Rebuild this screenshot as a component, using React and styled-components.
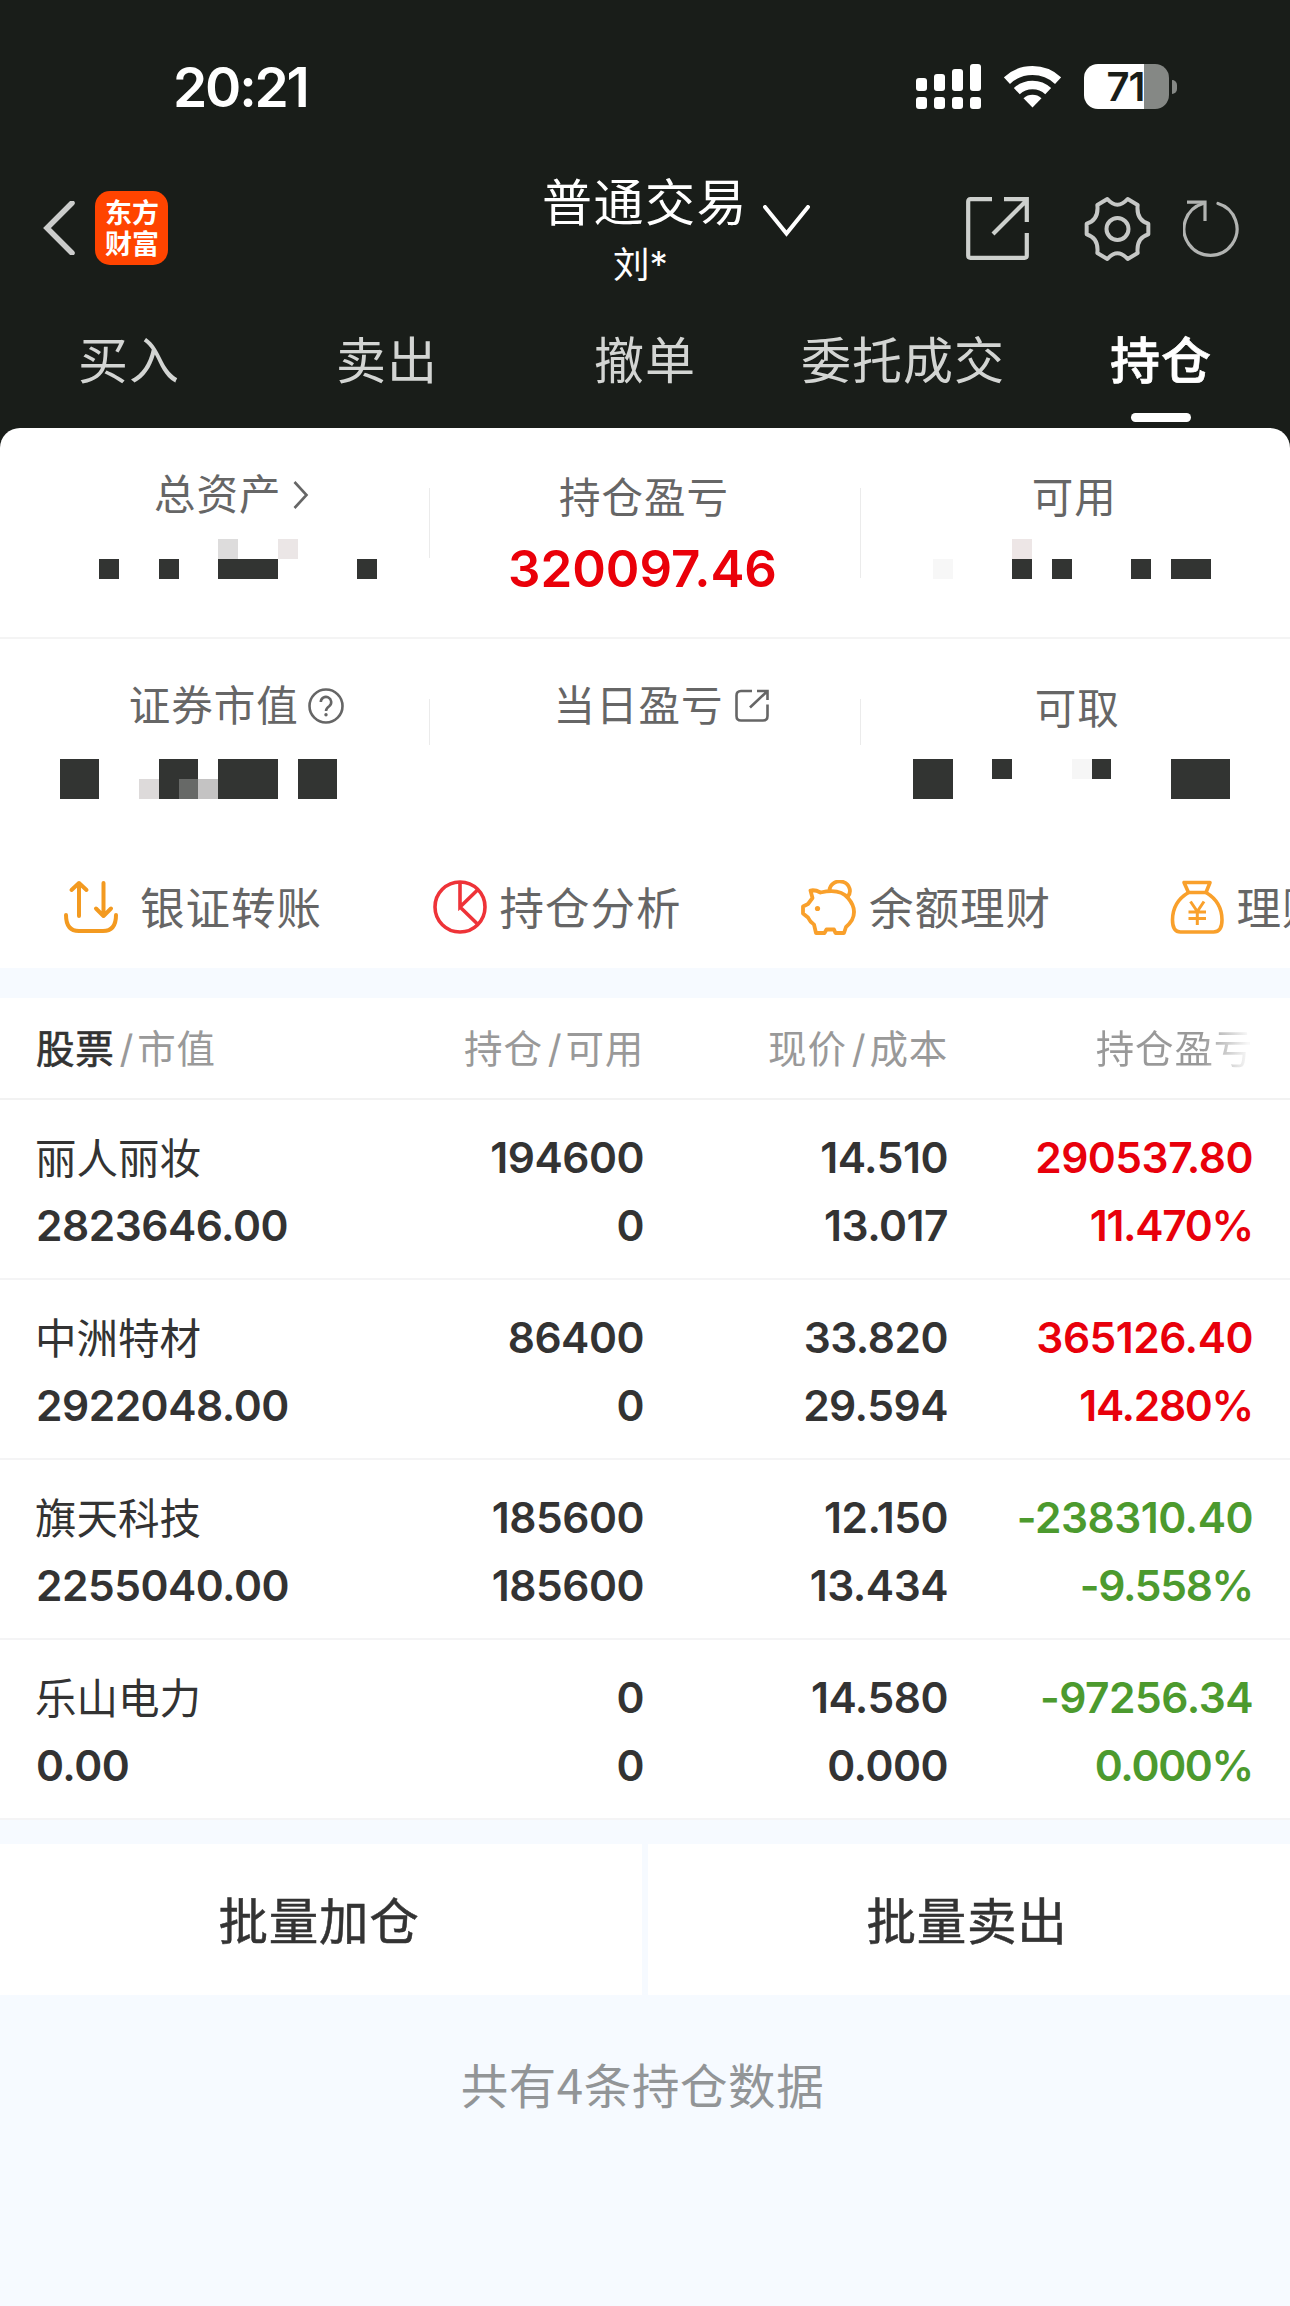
import React from 'react';
import styled, { createGlobalStyle, css } from 'styled-components';

const GlobalStyle = createGlobalStyle`
  * {
    box-sizing: border-box;
  }
  body {
    margin: 0;
    background-color: #f6faff;
  }
`;

const Page = styled.div`
  width: 1290px;
  height: 2306px;
  overflow: hidden;
  background-color: #f6faff;
  color: #333333;
  font-family: Inter, 'Noto Sans CJK SC', sans-serif;
  white-space: nowrap;
`;

const Top = styled.header`
  height: 448px;
  background-color: #191d19;
  color: white;

  svg {
    display: block;
    flex: none;
  }
`;

const StatusBar = styled.div`
  display: flex;
  align-items: center;
  height: 165px;
  padding: 9px 113px 0 173px;
`;

const Clock = styled.div`
  flex: 1;
  font-size: 55px;
  font-weight: 600;
  letter-spacing: -2.2px;
`;

const StatusIcons = styled.div`
  display: flex;
  align-items: center;
  gap: 23px;
  margin-top: -1px;
`;

const Battery = styled.div`
  display: flex;
  align-items: center;
  gap: 3px;
`;

const BatteryBody = styled.div`
  width: 85px;
  height: 45px;
  padding-right: 2px;
  border-radius: 14px;
  background: linear-gradient(to right, #ffffff 60px, #858885 60px);
  color: #191d19;
  font-size: 40px;
  font-weight: 600;
  line-height: 45px;
  text-align: center;
  letter-spacing: -1px;
`;

const BatteryTip = styled.div`
  width: 5px;
  height: 14px;
  border-radius: 0 7px 7px 0;
  background-color: #858885;
`;

const NavBar = styled.div`
  display: grid;
  grid-template-columns: 500px 1fr 324px;
  height: 124px;
`;

const NavLeft = styled.div`
  display: flex;
  align-items: center;
  gap: 20px;
  padding-left: 43px;
`;

const Logo = styled.div`
  width: 73px;
  height: 74px;
  padding: 7px 0 0 1px;
  border-radius: 15px;
  background-color: #ff4400;
  font-size: 27px;
  font-weight: 700;
  line-height: 31px;
  text-align: center;
`;

const NavTitle = styled.div`
  display: flex;
  gap: 21px;
  padding-left: 42px;

  svg {
    margin-top: 40px;
  }
`;

const Titles = styled.div`
  width: 200px;
  padding-top: 1px;
  text-align: center;
`;

const Title = styled.div`
  font-size: 50px;
  line-height: 74px;
  letter-spacing: 1.5px;
`;

const SubTitle = styled.div`
  font-size: 36.5px;
  line-height: 50px;
  padding-right: 3px;
`;

const NavIcons = styled.div`
  display: flex;
  align-items: center;
  padding-top: 2px;
`;

const Tabs = styled.nav`
  display: flex;
`;

const Tab = styled.div`
  display: flex;
  flex: 1;
  flex-direction: column;
  align-items: center;
  padding-top: 37px;
  color: ${props => (props.$active ? 'white' : '#d3d5d3')};
  font-size: 50px;
  font-weight: ${props => (props.$active ? 500 : 400)};
  line-height: 70px;
  letter-spacing: 1px;
  -webkit-text-stroke: ${props => (props.$active ? '0.7px white' : '0')};

  &::after {
    content: '';
    width: 60px;
    height: 9px;
    margin-top: 17px;
    border-radius: 5px;
    background-color: ${props => (props.$active ? 'white' : 'transparent')};
  }
`;

const Summary = styled.section`
  margin-top: -20px;
  height: 540px;
  border-radius: 20px 20px 0 0;
  background-color: white;
  color: #666666;

  svg {
    display: block;
    flex: none;
  }
`;

const SummaryRow = styled.div`
  position: relative;
  display: flex;
  align-items: flex-start;
  height: ${props => (props.$line ? 211 : 209)}px;
  border-bottom: ${props => (props.$line ? '2px solid #f4f4f4' : 'none')};
`;

const SummaryCell = styled.div`
  display: flex;
  flex: 1;
  flex-direction: column;
  align-items: center;
  padding-top: ${props => (props.$raised ? 42 : 45)}px;
`;

const Divider = styled.div`
  width: 1px;
  height: ${props => props.$height}px;
  margin-top: 60px;
  background-color: #ebebeb;
`;

const Label = styled.div`
  display: flex;
  align-items: center;
  margin-left: ${props => props.$shift || 0}px;
  font-size: 41.5px;
  line-height: 50px;
  letter-spacing: 1px;
`;

/* keeps the caption centred, the icon hangs off its right side */
const Hanging = styled.span`
  width: 0;
  margin: 0 ${props => -props.$gap}px 0 ${props => props.$gap}px;
`;

const Total = styled.div`
  margin: 16px 0 0 -5px;
  color: #ea0009;
  font-size: 51px;
  font-weight: 600;
  line-height: 60px;
`;

const Mosaic = styled.div`
  position: absolute;
  top: ${props => props.$top}px;
  left: 0;
  display: grid;
  grid-template-columns: repeat(65, 1fr);
  grid-template-rows: 20px 20px;
  width: 1290px;
`;

const Block = styled.div`
  grid-column: ${props => props.$col + 1} / span ${props => props.$w || 1};
  grid-row: ${props => props.$row || 1} / span ${props => props.$h || 1};
  background-color: ${props => props.$color || '#323432'};
`;

const Actions = styled.div`
  display: flex;
  height: 118px;
  padding-left: 64px;
  overflow: hidden;
`;

const Action = styled.div`
  display: flex;
  flex: none;
  align-items: center;
  gap: ${props => props.$gap || 13}px;
  width: 368.5px;
  font-size: 44.5px;
  letter-spacing: 1px;

  span {
    padding-bottom: 3px;
  }
`;

const Holdings = styled.section`
  margin-top: 30px;
  background-color: white;
`;

const columns = css`
  display: grid;
  grid-template-columns: 301px 307px 304px 305px;
  padding-left: 36px;
`;

const HeadRow = styled.div`
  ${columns}
  height: 102px;
  border-bottom: 2px solid #f2f2f2;
  color: #999999;
  font-size: 38.5px;
  line-height: 102px;
  letter-spacing: 0.8px;
`;

const HeadCell = styled.div`
  text-align: ${props => (props.$left ? 'left' : 'right')};

  b {
    color: #333333;
    font-weight: 400;
    -webkit-text-stroke: 0.7px #333333;
  }
  i {
    margin: 0 3px 0 5px;
    font-style: normal;
  }
`;

const FadeCell = styled(HeadCell)`
  background: linear-gradient(to right, #999999 254px, #f8f8f8 300px);
  background-clip: text;
  color: transparent;
`;

const Row = styled.div`
  ${columns}
  height: 180px;
  padding-top: 24px;
  border-bottom: 2px solid #f4f4f5;
  line-height: 68px;
`;

const Cell = styled.div`
  color: ${props => props.$color || '#333333'};
  font-size: 42.5px;
  font-weight: 600;
  text-align: ${props => (props.$left ? 'left' : 'right')};
  letter-spacing: -0.5px;
`;

const Name = styled.div`
  margin: 1px 0 -1px -1px;
  font-size: 41.5px;
  font-weight: 400;
  letter-spacing: 0;
`;

const Batch = styled.div`
  display: flex;
  gap: 6px;
  margin-top: 24px;
`;

const BatchButton = styled.button`
  flex: 1;
  height: 151px;
  padding: 0 4px 3px 0;
  border: none;
  background-color: white;
  color: #333333;
  font-family: inherit;
  font-size: 49.5px;
  letter-spacing: 0.8px;
  -webkit-text-stroke: 0.5px #333333;
`;

const Footer = styled.div`
  padding: 58px 5px 0 0;
  color: #929597;
  font-family: 'Noto Sans CJK SC', sans-serif;
  font-size: 47.5px;
  line-height: 62px;
  text-align: center;
  letter-spacing: 0.6px;
`;

const RED = '#e8000b';
const GREEN = '#4c9a2e';

const tabs = ['买入', '卖出', '撤单', '委托成交', '持仓'];

const stocks = [
  {
    name: '丽人丽妆',
    value: '2823646.00',
    hold: '194600',
    usable: '0',
    price: '14.510',
    cost: '13.017',
    profit: '290537.80',
    rate: '11.470%',
    color: RED,
  },
  {
    name: '中洲特材',
    value: '2922048.00',
    hold: '86400',
    usable: '0',
    price: '33.820',
    cost: '29.594',
    profit: '365126.40',
    rate: '14.280%',
    color: RED,
  },
  {
    name: '旗天科技',
    value: '2255040.00',
    hold: '185600',
    usable: '185600',
    price: '12.150',
    cost: '13.434',
    profit: '-238310.40',
    rate: '-9.558%',
    color: GREEN,
  },
  {
    name: '乐山电力',
    value: '0.00',
    hold: '0',
    usable: '0',
    price: '14.580',
    cost: '0.000',
    profit: '-97256.34',
    rate: '0.000%',
    color: GREEN,
  },
];

const SignalIcon = () => (
  <svg width="65" height="45" fill="white">
    {[14, 10, 5, 0].map((y, i) => (
      <React.Fragment key={y}>
        <rect x={i * 18} y={y} width="11" height={27 - y} rx="3" />
        <rect x={i * 18} y="33" width="11" height="12" rx="3" />
      </React.Fragment>
    ))}
  </svg>
);

const WifiIcon = () => (
  <svg width="57" height="43" fill="none" stroke="white">
    <path d="M2.9 15.6a37.5 37.5 0 0 1 51.2 0" strokeWidth="9" />
    <path d="M12.8 26.2a23 23 0 0 1 31.4 0" strokeWidth="8.6" />
    <path d="M28.5 42.5l-9-9.3a13.5 13.5 0 0 1 18 0z" fill="white" stroke="none" />
  </svg>
);

const BackIcon = () => (
  <svg width="32" height="54" fill="none" stroke="#cbcccb" strokeWidth="5.5">
    <path d="M29 2L4 27l25 25" strokeLinecap="round" />
  </svg>
);

const DownIcon = () => (
  <svg width="47" height="34" fill="none" stroke="white" strokeWidth="4">
    <path d="M2 2l21.5 26.5L45 2" strokeLinecap="round" />
  </svg>
);

const OpenIcon = () => (
  <svg width="64" height="64" fill="none" stroke="#cdd0cd" strokeWidth="4.2">
    <path d="M26 2.2H4.5q-2.3 0-2.3 2.3v54q0 2.3 2.3 2.3h54q2.3 0 2.3-2.3V36" />
    <path d="M38 2.2h22.8V25M27 37L60 4" />
  </svg>
);

const GearIcon = () => (
  <svg
    width="67"
    height="66"
    viewBox="0 0 201 198"
    fill="none"
    stroke="#c6c8c6"
    strokeWidth="12"
    strokeLinejoin="round"
  >
    <path d="M70 9Q100 43 131 9L161 27Q156 72 193 83V115Q156 126 161 171L131 189Q100 155 70 189L40 171Q45 126 8 115V83Q45 72 40 27Z" />
    <circle cx="100.5" cy="99" r="33" />
  </svg>
);

const RefreshIcon = () => (
  <svg width="60" height="60" fill="none" stroke="#b2b4b2" strokeWidth="3.2">
    <path d="M35 4.5A26.5 26.5 0 1 1 20 4.5" strokeLinecap="round" />
    <path d="M4 3.2h18V22" />
  </svg>
);

const ArrowIcon = () => (
  <svg width="16" height="30" fill="none" stroke="#666666" strokeWidth="2.6">
    <path d="M1.5 2L13.5 15L1.5 28" />
  </svg>
);

const HelpIcon = () => (
  <svg width="36" height="36" fill="none" stroke="#666666" strokeWidth="2.6">
    <circle cx="18" cy="18" r="16.5" />
    <path d="M12.8 14a5.2 5.2 0 1 1 8.6 4q-3.4 2.5-3.4 5" />
    <circle cx="18" cy="26.8" r="1.7" fill="#666666" stroke="none" />
  </svg>
);

const SmallOpenIcon = () => (
  <svg width="34" height="34" fill="none" stroke="#666666" strokeWidth="2.6">
    <path d="M17 2H6Q1.5 2 1.5 6.5V27q0 4.5 4.5 4.5h22q4.500 0 4.500-4.500V15.500" />
    <path d="M22 2h10.500v9M15 18.500L32 2.500" />
  </svg>
);

const TransferIcon = () => (
  <svg
    width="54"
    height="54"
    fill="none"
    stroke="#f39a20"
    strokeWidth="4"
    strokeLinecap="round"
    strokeLinejoin="round"
  >
    <path d="M15 36V3M7.5 10L15 3l7.5 7M39.5 3v33M32 28.5l7.5 7.5 7.5-7.5" />
    <path d="M2 35q0 16 13 16h24q13 0 13-16" />
  </svg>
);

const PieIcon = () => (
  <svg width="54" height="54" fill="none" stroke="#ee3338" strokeWidth="3.6">
    <circle cx="27" cy="27" r="25" />
    <path d="M27 2v25L45 9.5M27 27l18 17.5" />
  </svg>
);

const PigIcon = () => (
  <svg
    width="55"
    height="55"
    fill="none"
    stroke="#f9a02b"
    strokeWidth="3.8"
    strokeLinejoin="round"
  >
    <path d="M28.5 10.500A10.200 9.500 0 1 1 46.500 17" />
    <path d="M9.500 10.500Q14 9.500 19.500 12.500Q39 8 47 18Q56.500 29 51 40Q48.500 44 45 47L43 53H34.500L33 49.500H25.500L23.500 53H15L13 44.500Q9 42 7 37.500L2 33.500V26.500L7 24L11.500 18Z" />
    <circle cx="16.500" cy="28.500" r="2.600" fill="#f9a02b" stroke="none" />
  </svg>
);

const BagIcon = () => (
  <svg
    width="54"
    height="54"
    fill="none"
    stroke="#f9a02b"
    strokeWidth="3.6"
    strokeLinejoin="round"
  >
    <path d="M14 2.500H40L36 12.500H18.500Z" />
    <path d="M18.500 12.500Q2.500 22 2.500 40Q2.500 52 10.500 52H43.500Q52 52 52 40Q52 22 36 12.500" />
    <path d="M20.500 21.500L27.300 31.500L34 21.500M27.300 31.500V45M18.500 32H36M18.500 38.500H36" strokeWidth="3" />
  </svg>
);

const StockRow = ({ stock }) => (
  <Row>
    <Cell $left>
      <Name>{stock.name}</Name>
      <div>{stock.value}</div>
    </Cell>
    <Cell>
      <div>{stock.hold}</div>
      <div>{stock.usable}</div>
    </Cell>
    <Cell>
      <div>{stock.price}</div>
      <div>{stock.cost}</div>
    </Cell>
    <Cell $color={stock.color}>
      <div>{stock.profit}</div>
      <Rate>{stock.rate}</Rate>
    </Cell>
  </Row>
);

const Rate = styled.div`
  letter-spacing: -1.3px;
`;

const NavGap = styled.span`
  width: ${props => props.$width}px;
`;

const App = () => {
  return (
    <Page>
      <GlobalStyle />
      <Top>
        <StatusBar>
          <Clock>20:21</Clock>
          <StatusIcons>
            <SignalIcon />
            <WifiIcon />
            <Battery>
              <BatteryBody>71</BatteryBody>
              <BatteryTip />
            </Battery>
          </StatusIcons>
        </StatusBar>
        <NavBar>
          <NavLeft>
            <BackIcon />
            <Logo>
              东方
              <br />
              财富
            </Logo>
          </NavLeft>
          <NavTitle>
            <Titles>
              <Title>普通交易</Title>
              <SubTitle>刘*</SubTitle>
            </Titles>
            <DownIcon />
          </NavTitle>
          <NavIcons>
            <OpenIcon />
            <NavGap $width={54} />
            <GearIcon />
            <NavGap $width={32} />
            <RefreshIcon />
          </NavIcons>
        </NavBar>
        <Tabs>
          {tabs.map(tab => (
            <Tab key={tab} $active={tab === '持仓'}>
              {tab}
            </Tab>
          ))}
        </Tabs>
      </Top>

      <Summary>
        <SummaryRow $line>
          <SummaryCell $raised>
            <Label $shift={6}>
              总资产
              <Hanging $gap={12}>
                <ArrowIcon />
              </Hanging>
            </Label>
          </SummaryCell>
          <Divider $height={70} />
          <SummaryCell>
            <Label $shift={-2}>持仓盈亏</Label>
            <Total>320097.46</Total>
          </SummaryCell>
          <Divider $height={90} />
          <SummaryCell>
            <Label $shift={-2}>可用</Label>
          </SummaryCell>
          <Mosaic $top={111}>
            <Block $col={11} $color="#dddcdc" />
            <Block $col={14} $color="#ebe6e6" />
            <Block $col={51} $color="#ede6e6" />
            <Block $row={2} $col={5} />
            <Block $row={2} $col={8} />
            <Block $row={2} $col={11} $w={3} />
            <Block $row={2} $col={18} />
            <Block $row={2} $col={47} $color="#f7f7f7" />
            <Block $row={2} $col={51} />
            <Block $row={2} $col={53} />
            <Block $row={2} $col={57} />
            <Block $row={2} $col={59} $w={2} />
          </Mosaic>
        </SummaryRow>
        <SummaryRow>
          <SummaryCell $raised>
            <Label $shift={-2}>
              证券市值
              <Hanging $gap={9}>
                <HelpIcon />
              </Hanging>
            </Label>
          </SummaryCell>
          <Divider $height={46} />
          <SummaryCell $raised>
            <Label $shift={-13}>
              当日盈亏
              <Hanging $gap={11}>
                <SmallOpenIcon />
              </Hanging>
            </Label>
          </SummaryCell>
          <Divider $height={46} />
          <SummaryCell>
            <Label $shift={4}>可取</Label>
          </SummaryCell>
          <Mosaic $top={120}>
            <Block $col={3} $w={2} $h={2} />
            <Block $row={2} $col={7} $color="#dddada" />
            <Block $col={8} $w={2} />
            <Block $row={2} $col={8} />
            <Block $row={2} $col={9} $color="#676967" />
            <Block $row={2} $col={10} $color="#c4c3c3" />
            <Block $col={11} $w={3} $h={2} />
            <Block $col={15} $w={2} $h={2} />
            <Block $col={46} $w={2} $h={2} />
            <Block $col={50} />
            <Block $col={54} $color="#f6f6f6" />
            <Block $col={55} />
            <Block $col={59} $w={3} $h={2} />
          </Mosaic>
        </SummaryRow>
        <Actions>
          <Action $gap={22}>
            <TransferIcon />
            <span>银证转账</span>
          </Action>
          <Action>
            <PieIcon />
            <span>持仓分析</span>
          </Action>
          <Action>
            <PigIcon />
            <span>余额理财</span>
          </Action>
          <Action>
            <BagIcon />
            <span>理财</span>
          </Action>
        </Actions>
      </Summary>

      <Holdings>
        <HeadRow>
          <HeadCell $left>
            <b>股票</b>
            <i>/</i>市值
          </HeadCell>
          <HeadCell>
            持仓<i>/</i>可用
          </HeadCell>
          <HeadCell>
            现价<i>/</i>成本
          </HeadCell>
          <FadeCell>持仓盈亏</FadeCell>
        </HeadRow>
        {stocks.map(stock => (
          <StockRow key={stock.name} stock={stock} />
        ))}
      </Holdings>

      <Batch>
        <BatchButton>批量加仓</BatchButton>
        <BatchButton>批量卖出</BatchButton>
      </Batch>
      <Footer>共有4条持仓数据</Footer>
    </Page>
  );
};

export default App;
